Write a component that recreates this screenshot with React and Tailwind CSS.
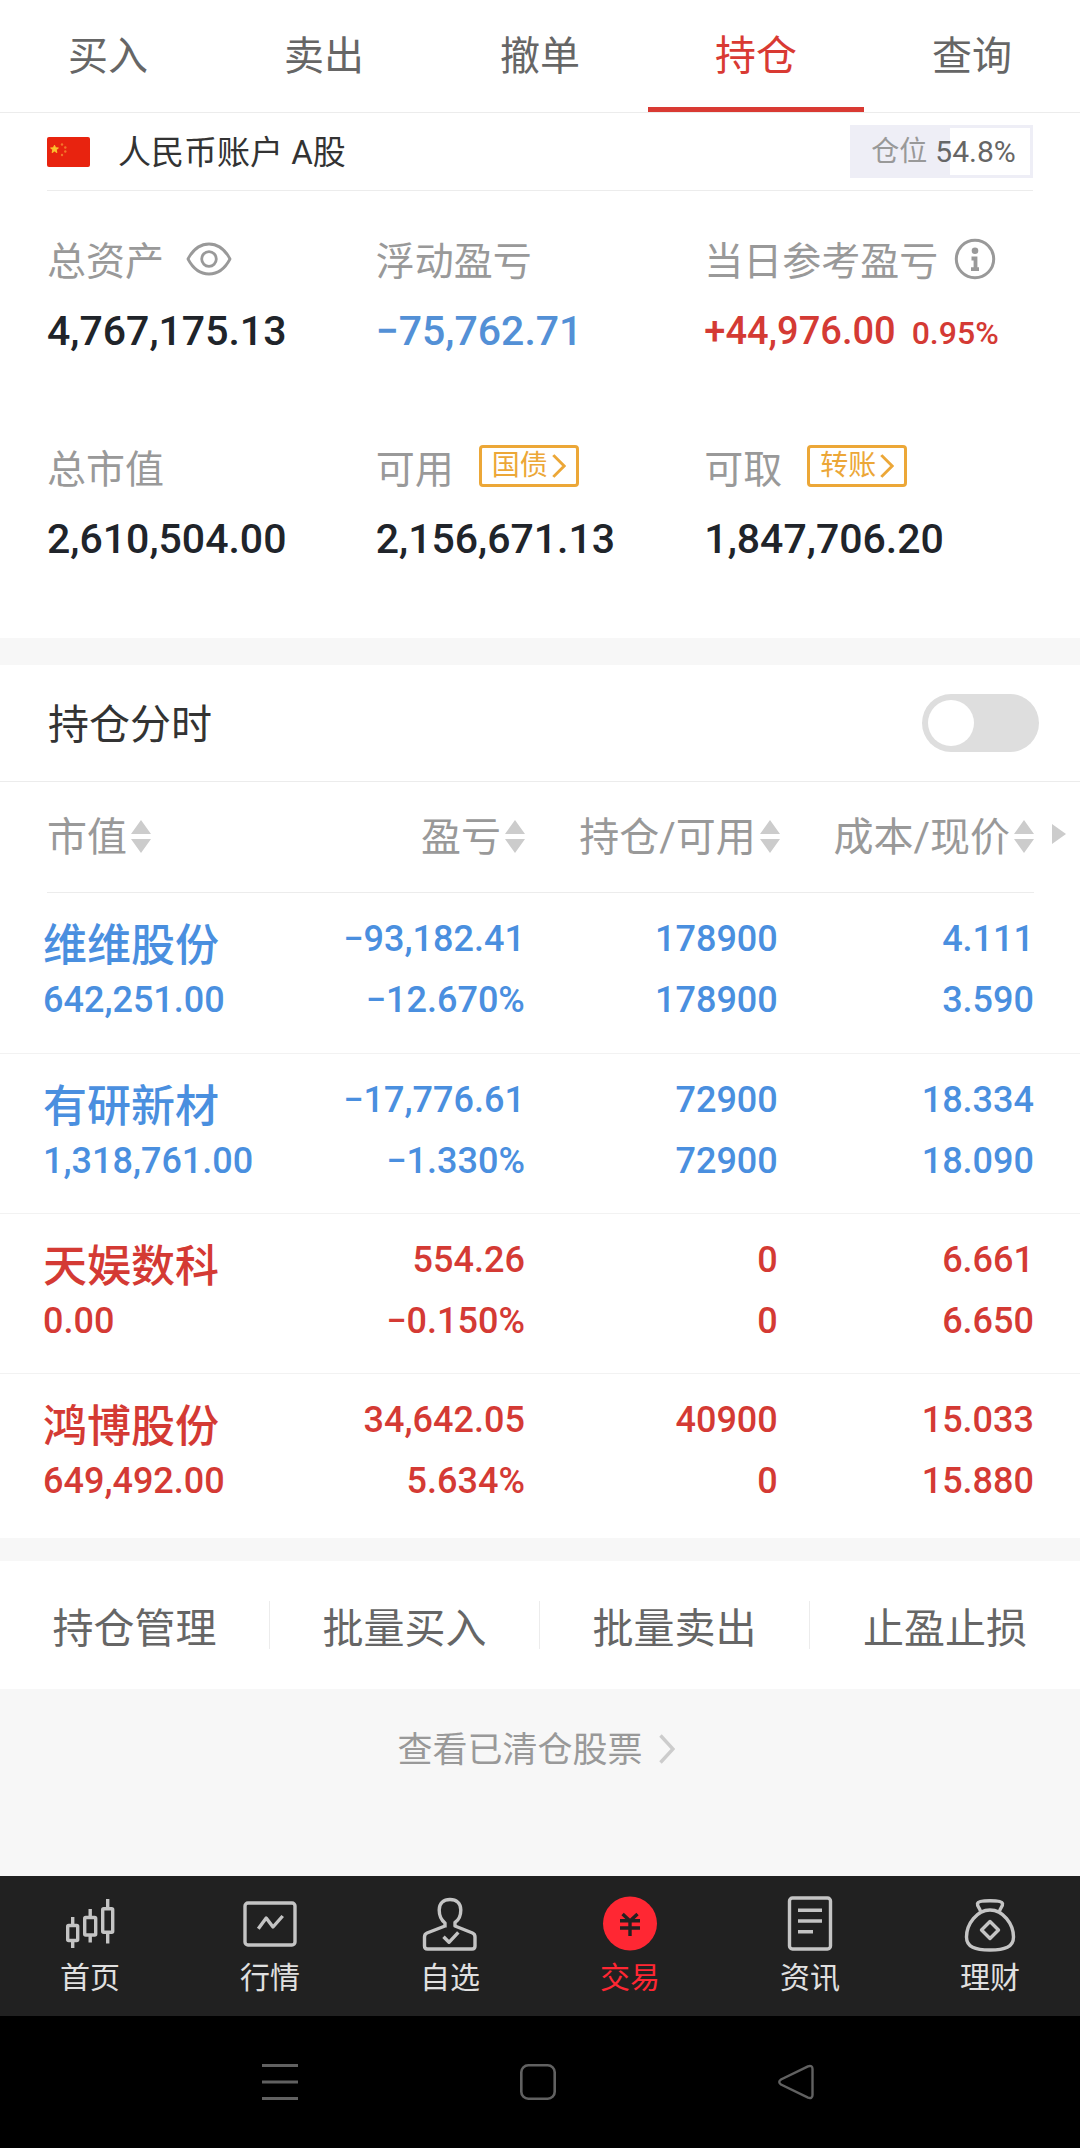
import { useState } from 'react';
import clsx from 'clsx';

const TABS = ['买入', '卖出', '撤单', '持仓', '查询'];

const COLUMNS = ['市值', '盈亏', '持仓/可用', '成本/现价'];

const HOLDINGS = [
    { name: '维维股份', value: '642,251.00', profit: '−93,182.41', rate: '−12.670%', held: '178900', usable: '178900', cost: '4.111', price: '3.590', up: false },
    { name: '有研新材', value: '1,318,761.00', profit: '−17,776.61', rate: '−1.330%', held: '72900', usable: '72900', cost: '18.334', price: '18.090', up: false },
    { name: '天娱数科', value: '0.00', profit: '554.26', rate: '−0.150%', held: '0', usable: '0', cost: '6.661', price: '6.650', up: true },
    { name: '鸿博股份', value: '649,492.00', profit: '34,642.05', rate: '5.634%', held: '40900', usable: '0', cost: '15.033', price: '15.880', up: true }
];

const ACTIONS = ['持仓管理', '批量买入', '批量卖出', '止盈止损'];

function FlagIcon() {
    return (
        <svg viewBox="0 0 43 30" className="w-[43px] h-[30px] flex-shrink-0">
            <rect width="43" height="30" rx="2" fill="#e8230f" />
            <path d="M7.5 8.2l1.1 2.6 2.8.2-2.2 1.8.7 2.8-2.4-1.5-2.4 1.5.7-2.8-2.2-1.8 2.8-.2z" fill="#fbc02d" stroke="#fbc02d" />
            <g fill="#f2762a">
                <circle cx="15" cy="7.5" r="1.2" />
                <circle cx="18.3" cy="10.5" r="1.2" />
                <circle cx="18.3" cy="14.5" r="1.2" />
                <circle cx="15" cy="18" r="1.2" />
            </g>
        </svg>
    );
}

function EyeIcon() {
    return (
        <svg viewBox="0 0 46 34" className="w-[46px] h-[34px]" fill="none" stroke="#999" strokeWidth="2.8">
            <path d="M2 17C7 7.5 14 2 23 2s16 5.5 21 15c-5 9.5-12 15-21 15S7 26.5 2 17z" strokeLinejoin="round" />
            <circle cx="23" cy="17" r="7.3" />
        </svg>
    );
}

function InfoIcon() {
    return (
        <svg viewBox="0 0 42 42" className="w-[42px] h-[42px]" fill="none" stroke="#999">
            <circle cx="21" cy="21" r="18.7" strokeWidth="3" />
            <circle cx="21" cy="12.8" r="3.3" fill="#999" stroke="none" />
            <path d="M17.5 20.5h4V31M17 31.2h8" strokeWidth="3.8" />
        </svg>
    );
}

function Chevron({ className }) {
    return (
        <svg viewBox="0 0 16 30" className={className} fill="none" stroke="currentColor" preserveAspectRatio="none">
            <path d="M1.5 1.5L14 15 1.5 28.5" strokeWidth="3.4" />
        </svg>
    );
}

function SortIcon() {
    return (
        <svg viewBox="0 0 20 34" className="w-5 h-[34px]" fill="#ccc">
            <path d="M10 0l10 14H0zM0 19h20L10 33z" />
        </svg>
    );
}

const NAV = [
    {
        label: '首页',
        icon: (
            <>
                <rect x="5.7" y="29.5" width="10" height="15" rx="1" />
                <rect x="22.7" y="21.5" width="11" height="17.5" rx="1" />
                <rect x="40.7" y="12.8" width="10" height="23.5" rx="1" />
                <path d="M10.7 21v8M10.7 45v7M28.2 13v8M28.2 40v6.500M45.700 3v9M45.700 37v10.500" />
            </>
        )
    },
    {
        label: '行情',
        icon: (
            <>
                <rect x="3" y="7" width="50" height="42" rx="3" />
                <path d="M16.3 32.700L24.200 22 31 31l9.700-11" />
            </>
        )
    },
    {
        label: '自选',
        icon: (
            <>
                <path d="M23 31.500v-4.500C19.200 24 17.200 19 17.200 14c0-6.500 4.300-10.500 10.800-10.500S38.800 7.500 38.800 14c0 5-2 10-5.800 12.500v3.500l17.500 7q2.500 1 2.500 4v9q0 3-3 3H5.500q-3 0-3-3v-9q0-3 2.500-4l18-7" />
                <path d="M21.500 40.700l5.500 5.600 9.300-10" />
            </>
        )
    },
    {
        label: '交易',
        active: true,
        icon: (
            <>
                <circle cx="28" cy="27.5" r="27" fill="#ff2733" stroke="none" />
                <path d="M20.600 18l7.400 7 7.500-7M18 24.800h20M18 32h20M28 24v16" stroke="#212121" />
            </>
        )
    },
    {
        label: '资讯',
        icon: (
            <>
                <rect x="7.5" y="2" width="41" height="51" rx="3" />
                <path d="M16 14.300h24M16 25h24M16 35.700h15" />
            </>
        )
    },
    {
        label: '理财',
        icon: (
            <>
                <path d="M28 14C15 14 4.500 28 4.500 41 4.500 51 13 54 28 54s23.500-3 23.500-13C51.500 28 41 14 28 14z" />
                <path d="M18.500 15.500C18 12 15 10.500 15.500 7.500 16 5.500 21 4.800 28 4.800s12 .7 12.500 2.700c.5 3-2.500 4.500-3 8" />
                <path d="M28 25.500l8.500 8.500-8.500 8.500-8.500-8.500z" />
            </>
        )
    }
];

function Stat({ label, extra, children }) {
    return (
        <div>
            <div className="flex items-center h-[60px] text-[39px] text-[#999]">
                <span className="pt-1">{label}</span>
                {extra}
            </div>
            <div className="flex items-baseline h-20 leading-[82px] text-[41px] font-medium text-[#20242a]">
                {children}
            </div>
        </div>
    );
}

function TagButton({ children }) {
    return (
        <button className="mb-1 ml-[25px] flex items-center gap-1 h-[42px] px-[10px] border-[3px] border-[#eca737] rounded text-[28px] leading-none text-[#eca737]">
            {children}
            <Chevron className="w-[14px] h-6" />
        </button>
    );
}

function HoldingRow({ item }) {
    const cell = 'p-0 pt-4 align-top text-right';
    const line = 'block h-[61px] leading-[61px]';

    return (
        <tr className={clsx('h-40 border-b border-[#f2f2f2] last:border-0', item.up ? 'text-[#d43a34]' : 'text-[#4a8fdf]')}>
            <td className="p-0 pt-4 pl-[43px] align-top">
                <span className="block h-[61px] leading-[74px] text-[44px]">{item.name}</span>
                <span className={line}>{item.value}</span>
            </td>
            <td className={cell}>
                <span className={line}>{item.profit}</span>
                <span className={line}>{item.rate}</span>
            </td>
            <td className={clsx(cell, 'pr-[2px]')}>
                <span className={line}>{item.held}</span>
                <span className={line}>{item.usable}</span>
            </td>
            <td className={clsx(cell, 'pr-[46px]')}>
                <span className={line}>{item.cost}</span>
                <span className={line}>{item.price}</span>
            </td>
        </tr>
    );
}

export default function App() {
    const [tab, setTab] = useState('持仓');
    const [timeline, setTimeline] = useState(false);

    return (
        <div className="min-h-screen flex flex-col bg-[#f7f7f7] font-['Roboto','Noto_Sans_CJK_SC',sans-serif]">
            <nav className="flex h-[113px] bg-white border-b border-[#ececec]">
                {TABS.map((name) => (
                    <button
                        key={name}
                        onClick={() => setTab(name)}
                        className={clsx(
                            'flex-1 pt-[6px] border-b-[5px]',
                            name === tab ? 'text-[41px] text-[#d93a33] border-[#d93a33]' : 'text-[40px] text-[#666] border-transparent'
                        )}
                    >
                        {name}
                    </button>
                ))}
            </nav>

            <section className="px-[47px] bg-white">
                <div className="flex items-center h-[78px] border-b border-[#ececec]">
                    <FlagIcon />
                    <span className="ml-7 pt-[2px] text-[33px] text-[#333]">人民币账户 A股</span>
                    <div className="ml-auto flex items-center justify-center gap-2 w-[183px] h-[53px] pl-1 border-[3px] border-[#eeeef6] bg-[linear-gradient(to_right,#eeeef6_54.8%,#fff_54.8%)] text-[28px]">
                        <span className="text-[#999]">仓位</span>
                        <span className="text-[30px] text-[#666]">54.8%</span>
                    </div>
                </div>

                <div className="grid grid-cols-3 gap-y-[68px] pt-[39px] pb-[60px]">
                    <Stat label="总资产" extra={<button aria-label="隐藏资产" className="mb-[2px] ml-[22px]"><EyeIcon /></button>}>
                        4,767,175.13
                    </Stat>
                    <Stat label="浮动盈亏">
                        <span className="text-[#5390d6]">−75,762.71</span>
                    </Stat>
                    <Stat label="当日参考盈亏" extra={<button aria-label="说明" className="mb-[2px] ml-4"><InfoIcon /></button>}>
                        <span className="text-[38px] text-[#d43a34]">+44,976.00</span>
                        <span className="ml-4 text-[32px] text-[#d43a34]">0.95%</span>
                    </Stat>
                    <Stat label="总市值">2,610,504.00</Stat>
                    <Stat label="可用" extra={<TagButton>国债</TagButton>}>2,156,671.13</Stat>
                    <Stat label="可取" extra={<TagButton>转账</TagButton>}>1,847,706.20</Stat>
                </div>
            </section>

            <section className="mt-[27px] pb-[5px] bg-white">
                <label className="flex items-center justify-between h-[117px] pl-12 pr-[41px] border-b border-[#ececec] text-[41px] text-[#333]">
                    <span className="pt-[6px]">持仓分时</span>
                    <input
                        type="checkbox"
                        role="switch"
                        checked={timeline}
                        onChange={(e) => setTimeline(e.target.checked)}
                        className="appearance-none flex items-center w-[117px] h-[58px] p-[6px] rounded-full bg-[#dedede] checked:bg-[#d93a33] before:content-[''] before:size-[46px] before:rounded-full before:bg-white checked:before:ml-auto"
                    />
                </label>

                <table className="w-full table-fixed border-collapse text-[36px] font-medium">
                    <colgroup>
                        <col />
                        <col className="w-[23%]" />
                        <col className="w-[23.6%]" />
                        <col className="w-[27.8%]" />
                    </colgroup>
                    <thead>
                        <tr>
                            {COLUMNS.map((name, i) => (
                                <th key={name} className="relative p-0 first:pl-[47px] last:pr-[46px] text-[40px] font-normal text-[#999]">
                                    <button className={clsx('flex items-center gap-1 w-full h-[111px] border-b border-[#ececec] whitespace-nowrap', i > 0 && 'justify-end')}>
                                        <span className="pt-[2px]">{name}</span>
                                        <SortIcon />
                                    </button>
                                    {i === COLUMNS.length - 1 && (
                                        <svg viewBox="0 0 14 20" className="absolute right-[14px] top-[42px] w-[14px] h-5" fill="#ccc">
                                            <path d="M0 0l14 10L0 20z" />
                                        </svg>
                                    )}
                                </th>
                            ))}
                        </tr>
                    </thead>
                    <tbody>
                        {HOLDINGS.map((item) => (
                            <HoldingRow key={item.name} item={item} />
                        ))}
                    </tbody>
                </table>
            </section>

            <section className="mt-[23px] grid grid-cols-4 h-32 items-center bg-white divide-x divide-[#ececec]">
                {ACTIONS.map((name) => (
                    <button key={name} className="h-12 pt-1 text-[41px] leading-[48px] text-[#666]">
                        {name}
                    </button>
                ))}
            </section>

            <a href="#cleared" className="flex items-center justify-center gap-4 h-[120px] pr-2 text-[35px] text-[#999]">
                <span className="pt-1">查看已清仓股票</span>
                <Chevron className="w-4 h-[30px] text-[#ccc]" />
            </a>

            <nav className="mt-auto grid grid-cols-6 h-[140px] pt-5 bg-[#212121]">
                {NAV.map((item) => (
                    <a key={item.label} href="#nav" className={clsx('flex flex-col items-center gap-[6px] text-[30px]', item.active ? 'text-[#ff2733]' : 'text-[#e0e0e0]')}>
                        <svg viewBox="0 0 56 56" className="size-14" fill="none" stroke="#c4c4c4" strokeWidth="3.4" strokeLinejoin="round">
                            {item.icon}
                        </svg>
                        <span className="leading-10">{item.label}</span>
                    </a>
                ))}
            </nav>

            <div className="flex items-center justify-center gap-[222px] h-[132px] pr-1 bg-black">
                <button aria-label="菜单">
                    <svg viewBox="0 0 36 36" className="size-9" stroke="#616161" strokeWidth="3">
                        <path d="M0 1.500h36M0 18h36M0 34.500h36" />
                    </svg>
                </button>
                <button aria-label="主页">
                    <svg viewBox="0 0 36 36" className="size-9" fill="none" stroke="#616161" strokeWidth="2.6">
                        <rect x="1.3" y="1.3" width="33.4" height="33.4" rx="7" />
                    </svg>
                </button>
                <button aria-label="返回">
                    <svg viewBox="0 0 36 36" className="size-9" fill="none" stroke="#616161" strokeWidth="2.4">
                        <path d="M30 2.300L3 15.500Q-.5 18 3 20.500L30 33.700Q34.500 35 34.500 31V5Q34.500 1 30 2.300z" />
                    </svg>
                </button>
            </div>
        </div>
    );
}
